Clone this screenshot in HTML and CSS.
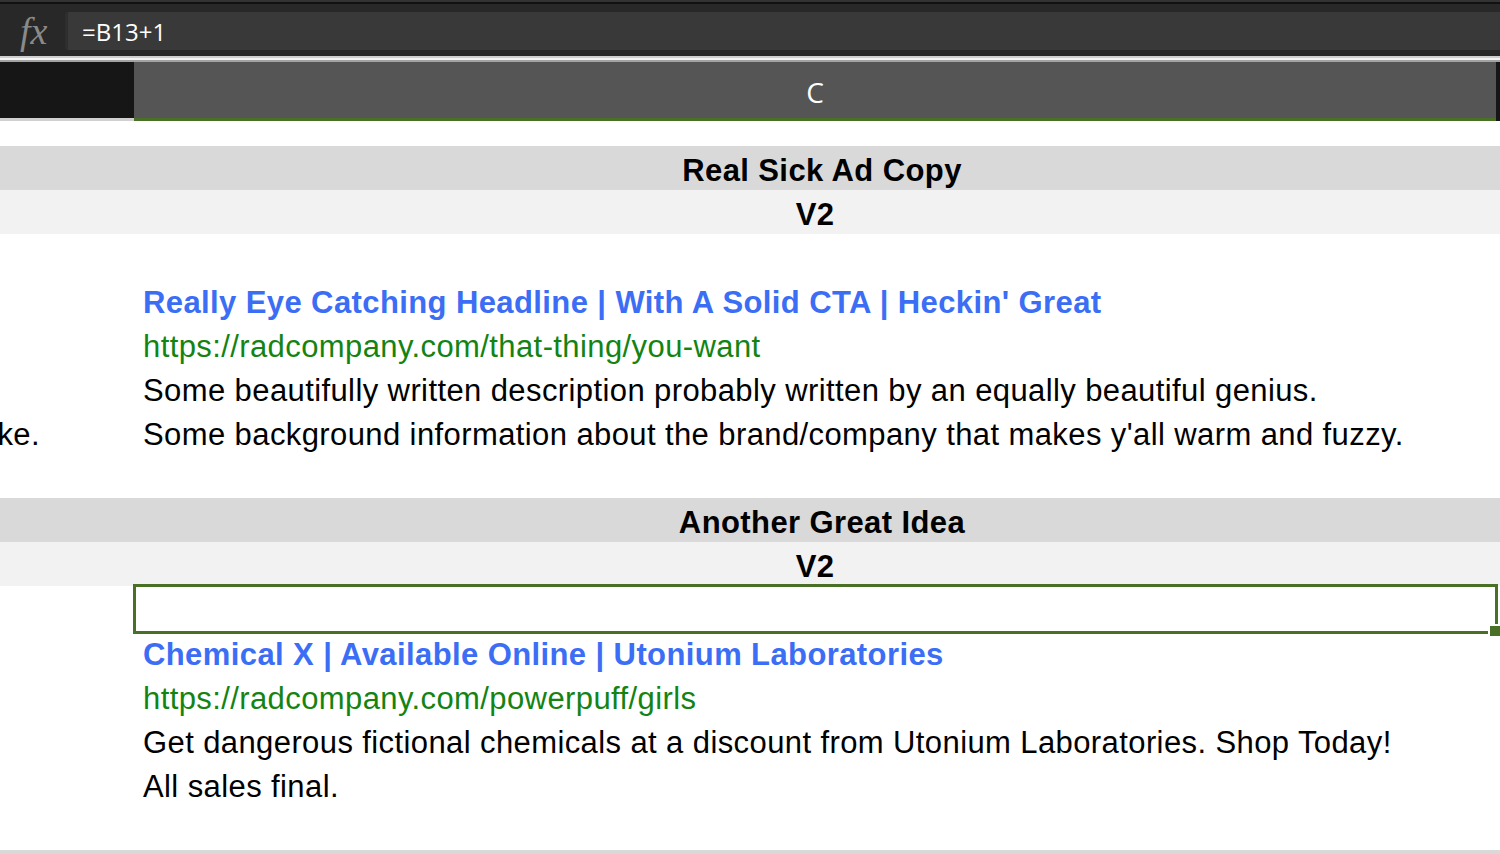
FILE: index.html
```html
<!DOCTYPE html>
<html lang="en">
<head>
  <meta charset="UTF-8">
  <title>Ad Copy - Sheet</title>
  <link rel="stylesheet" href="styles.css">
</head>
<body>
  <div class="formula-bar">
    <div class="fx">fx</div>
    <div class="formula-input">=B13+1</div>
  </div>
  <div class="bar-divider"></div>

  <div class="col-headers">
    <div class="corner"></div>
    <div class="col-head active">C</div>
    <div class="col-edge"></div>
  </div>

  <div class="sheet">
    <div class="row partial"><div class="cell"></div><div class="cell"></div></div>

    <div class="row title"><div class="cell"></div><div class="cell title-text">Real Sick Ad Copy</div></div>
    <div class="row version"><div class="cell"></div><div class="cell version-text">V2</div></div>
    <div class="row"><div class="cell"></div><div class="cell"></div></div>
    <div class="row"><div class="cell"></div><div class="cell headline">Really Eye Catching Headline | With A Solid CTA | Heckin' Great</div></div>
    <div class="row"><div class="cell"></div><div class="cell url">https://radcompany.com/that-thing/you-want</div></div>
    <div class="row"><div class="cell"></div><div class="cell desc">Some beautifully written description probably written by an equally beautiful genius.</div></div>
    <div class="row"><div class="cell overflow">ke.</div><div class="cell desc">Some background information about the brand/company that makes y'all warm and fuzzy.</div></div>
    <div class="row"><div class="cell"></div><div class="cell"></div></div>

    <div class="row title"><div class="cell"></div><div class="cell title-text">Another Great Idea</div></div>
    <div class="row version"><div class="cell"></div><div class="cell version-text">V2</div></div>
    <div class="row"><div class="cell"></div><div class="cell selected"></div></div>
    <div class="row"><div class="cell"></div><div class="cell headline">Chemical X | Available Online | Utonium Laboratories</div></div>
    <div class="row"><div class="cell"></div><div class="cell url">https://radcompany.com/powerpuff/girls</div></div>
    <div class="row"><div class="cell"></div><div class="cell desc">Get dangerous fictional chemicals at a discount from Utonium Laboratories. Shop Today!</div></div>
    <div class="row"><div class="cell"></div><div class="cell desc">All sales final.</div></div>
    <div class="row"><div class="cell"></div><div class="cell"></div></div>
    <div class="row title"><div class="cell"></div><div class="cell"></div></div>
  </div>
</body>
</html>
```

FILE: styles.css
```css
body {
  margin: 0;
  padding: 0;
  background-color: white;
  font-family: 'Liberation Sans', Arial, sans-serif;
  overflow: hidden;
}
.formula-bar {
  height: 52px;
  background-color: #282828;
  border-top: 2px solid #333;
  box-shadow: inset 0 2px 0 #111;
  display: flex;
  align-items: flex-start;
  padding-top: 2px;
  box-sizing: content-box;
}
.fx {
  width: 65px;
  padding-left: 20px;
  padding-top: 8px;
  box-sizing: border-box;
  font-family: 'Liberation Serif', 'Times New Roman', serif;
  font-style: italic;
  font-size: 38px;
  color: #8a8a8a;
  line-height: 1;
}
.formula-input {
  flex: 1;
  height: 38px;
  margin-top: 8px;
  background-color: #393939;
  border-left: 3px solid #2e2e2e;
  border-radius: 2px 0 0 2px;
  padding-left: 14px;
  color: white;
  font-family: 'Open Sans', 'Noto Sans', sans-serif;
  font-size: 24px;
  line-height: 40px;
}
.bar-divider {
  height: 2px;
  background-color: #f4f4f4;
  border-top: 2px solid #cfcfcf;
  border-bottom: 2px solid #a3a3a3;
}
.col-headers {
  display: grid;
  grid-template-columns: 134px 1362px 1fr;
  height: 59px;
}
.corner {
  background-color: #161616;
  border-bottom: 3px solid #d0d0d0;
}
.col-head {
  background-color: #555;
  color: white;
  font-family: 'Open Sans', 'Noto Sans', sans-serif;
  font-size: 28px;
  display: flex;
  align-items: center;
  justify-content: center;
  padding-top: 4px;
}
.col-head.active {
  border-bottom: 3px solid #4a7028;
}
.col-edge {
  background-color: #161616;
}
.sheet {
  display: flex;
  flex-direction: column;
}
.row {
  display: grid;
  grid-template-columns: 134px 1362px 1fr;
  height: 44px;
}
.row.partial {
  height: 25px;
}
.row.title {
  background-color: #d9d9d9;
}
.row.version {
  background-color: #f2f2f2;
}
.cell {
  display: flex;
  align-items: center;
  white-space: nowrap;
  font-size: 31px;
  letter-spacing: 0.4px;
  color: black;
  position: relative;
}
.title-text,
.version-text {
  justify-content: center;
  font-weight: bold;
  padding-top: 6px;
}
.title-text {
  padding-left: 14px;
}
.headline,
.url,
.desc {
  padding-left: 9px;
  padding-top: 6px;
}
.headline {
  color: #3b6ef5;
  font-weight: bold;
}
.url {
  color: #138413;
}
.overflow {
  overflow: visible;
  justify-content: flex-end;
  padding-top: 6px;
  padding-right: 94px;
}
.selected {
  z-index: 1;
}
.selected::before {
  content: '';
  position: absolute;
  top: -2px;
  left: -1px;
  right: -2px;
  bottom: -4px;
  border: 3px solid #4a7028;
}
.selected::after {
  content: '';
  position: absolute;
  right: -4px;
  bottom: -6px;
  width: 10px;
  height: 10px;
  background-color: #4a7028;
  box-shadow: 0 0 0 2px white;
}
```
